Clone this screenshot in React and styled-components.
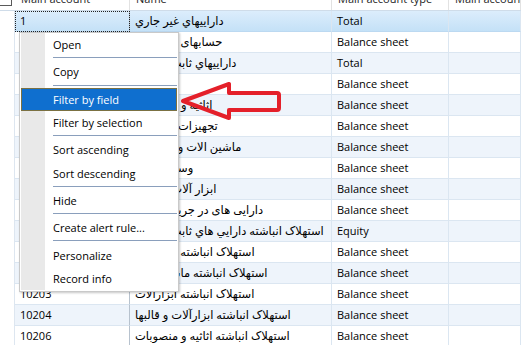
import React from "react";
import styled, { createGlobalStyle } from "styled-components";

const GlobalStyle = createGlobalStyle`
  html, body {
    margin: 0;
    padding: 0;
    background: #fff;
  }
  body {
    font-family: "Open Sans", "DejaVu Sans", sans-serif;
    font-size: 11px;
    color: #000;
  }
`;

const COLS = "15px 115px 202px 117px 1fr";

const rows = [
  { acc: "1", name: "دارايیهاي غير جاري", type: "Total" },
  { acc: "10", name: "حسابهای بلند مدت", type: "Balance sheet" },
  { acc: "101", name: "دارايیهاي ثابت مشهود", type: "Total" },
  { acc: "10101", name: "زمین", type: "Balance sheet" },
  { acc: "10102", name: "اثاثیه و منصوبات", type: "Balance sheet" },
  { acc: "10103", name: "تجهیزات رایانه ای", type: "Balance sheet" },
  { acc: "10104", name: "ماشین الات و تجهیزات", type: "Balance sheet" },
  { acc: "10105", name: "وسائط نقلیه", type: "Balance sheet" },
  { acc: "10106", name: "ابزار آلات و قالبها", type: "Balance sheet" },
  { acc: "10107", name: "دارایی های در جریان تکمیل", type: "Balance sheet" },
  { acc: "102", name: "استهلاک انباشته دارايي هاي ثابت مشهود", type: "Equity" },
  { acc: "10201", name: "استهلاک انباشته ساختمان", type: "Balance sheet" },
  { acc: "10202", name: "استهلاک انباشته ماشین آلات", type: "Balance sheet" },
  { acc: "10203", name: "استهلاک انباشته ابزارآلات", type: "Balance sheet" },
  { acc: "10204", name: "استهلاک انباشته ابزارآلات و قالبها", type: "Balance sheet" },
  { acc: "10206", name: "استهلاک انباشته اثاثیه و منصوبات", type: "Balance sheet" },
];

const menu = [
  { label: "Open" },
  { sep: true },
  { label: "Copy" },
  { sep: true },
  { label: "Filter by field", active: true },
  { label: "Filter by selection" },
  { sep: true },
  { label: "Sort ascending" },
  { label: "Sort descending" },
  { sep: true },
  { label: "Hide" },
  { sep: true },
  { label: "Create alert rule..." },
  { sep: true },
  { label: "Personalize" },
  { label: "Record info" },
];

const App = () => {
  return (
    <>
      <GlobalStyle />
      <Page>
        <Grid>
          <HeaderRow>
            <HeaderCell $marker>
              <CheckBox />
            </HeaderCell>
            <HeaderCell>Main account</HeaderCell>
            <HeaderCell>Name</HeaderCell>
            <HeaderCell>Main account type</HeaderCell>
            <HeaderCell>Main account category</HeaderCell>
          </HeaderRow>

          {rows.map((r, i) => {
            const selected = i === 0;
            const alt = i > 0 && i % 2 === 0;
            return (
              <Row key={i}>
                <Marker />
                <Cell $selected={selected} $alt={alt} $key $focus={selected}>
                  {r.acc}
                </Cell>
                <NameCell $selected={selected} $alt={alt} dir="rtl">
                  {r.name}
                </NameCell>
                <Cell $selected={selected} $alt={alt}>
                  {r.type}
                </Cell>
                <Cell $selected={selected} $alt={alt} />
              </Row>
            );
          })}
        </Grid>

        <ContextMenu>
          <MenuList>
            {menu.map((m, i) =>
              m.sep ? (
                <Separator key={i} />
              ) : (
                <MenuItem key={i} $active={m.active}>
                  {m.label}
                </MenuItem>
              )
            )}
          </MenuList>
        </ContextMenu>

        <Arrow width="521" height="345" viewBox="0 0 521 345">
          <path
            d="M183 101 L229 84 L229 93 L277 93 Q279 93 279 95 L279 108 Q279 110 277 110 L229 110 L229 118 Z"
            fill="none"
            stroke="#e4202a"
            strokeWidth="4"
            strokeLinejoin="round"
          />
        </Arrow>
      </Page>
    </>
  );
};

export default App;

const Page = styled.div`
  position: relative;
  width: 521px;
  height: 345px;
  overflow: hidden;
  background: #fff;
`;

const Grid = styled.div`
  margin-top: -13px;
  display: flex;
  flex-direction: column;
`;

const HeaderRow = styled.div`
  display: grid;
  grid-template-columns: ${COLS};
  height: 24px;
  box-sizing: border-box;
  border-bottom: 1px solid #cfdce9;
  background: #fff;
`;

const HeaderCell = styled.div`
  box-sizing: border-box;
  display: flex;
  align-items: center;
  padding-left: ${(p) => (p.$marker ? "0" : "6px")};
  border-right: ${(p) => (p.$marker ? "none" : "1px solid #e2e2e2")};
  white-space: nowrap;
  overflow: hidden;
  color: #1e1e1e;
`;

const CheckBox = styled.div`
  width: 13px;
  height: 13px;
  box-sizing: border-box;
  margin-left: -1px;
  margin-top: 1px;
  border: 1px solid #5a5a5a;
  background: #fff;
`;

const Row = styled.div`
  display: grid;
  grid-template-columns: ${COLS};
  height: 21px;
`;

const Marker = styled.div`
  background: #fff;
  border-right: 1px solid #dde6f0;
`;

const cellBg = (p) =>
  p.$selected
    ? "linear-gradient(#dcedfc, #c4e1f7)"
    : p.$alt
    ? "#eef4fb"
    : "#fff";

const Cell = styled.div`
  box-sizing: border-box;
  height: 21px;
  line-height: 20px;
  padding-left: 5px;
  background: ${cellBg};
  border-bottom: 1px solid ${(p) => (p.$selected ? "#bcd9f1" : "#dbe6f1")};
  border-right: 1px solid ${(p) => (p.$key ? "#b7c2ce" : "#dbe6f1")};
  white-space: nowrap;
  overflow: hidden;
  outline: ${(p) => (p.$focus ? "1px dotted #222" : "none")};
  outline-offset: -1px;
`;

const NameCell = styled(Cell)`
  text-align: left;
  padding-right: 4px;
  font-size: 11.5px;
  text-overflow: ellipsis;
`;

const ContextMenu = styled.div`
  position: absolute;
  left: 19px;
  top: 32px;
  width: 160px;
  box-sizing: border-box;
  padding: 0 1px 1px 1px;
  background: #fff;
  border: 1px solid #c9c9c9;
  box-shadow: 1px 1px 2px rgba(0, 0, 0, 0.22);
`;

const MenuList = styled.div`
  display: flex;
  flex-direction: column;
  background: linear-gradient(90deg, #e9e9e9 0 24px, #fff 24px 100%);
`;

const MenuItem = styled.div`
  box-sizing: border-box;
  height: 23.3px;
  display: flex;
  align-items: center;
  padding-left: 31px;
  font-size: 11px;
  color: ${(p) => (p.$active ? "#fff" : "#000")};
  background: ${(p) => (p.$active ? "#0f6fcf" : "transparent")};
  border: 1px solid ${(p) => (p.$active ? "#7b7142" : "transparent")};
`;

const Separator = styled.div`
  height: 4px;
  margin-left: 32px;
  box-sizing: border-box;
  padding-top: 1px;

  &::after {
    content: "";
    display: block;
    height: 1px;
    background: #8a9fbc;
  }
`;

const Arrow = styled.svg`
  position: absolute;
  left: 0;
  top: 0;
  pointer-events: none;
`;
